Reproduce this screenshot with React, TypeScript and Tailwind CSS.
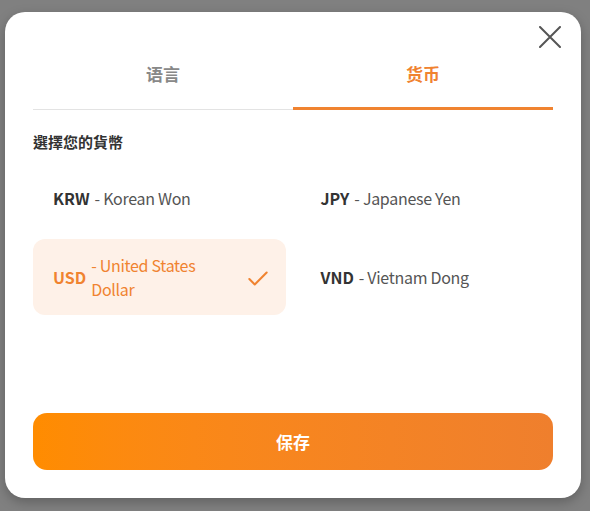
import React, { useState } from 'react';
import { Check } from 'lucide-react';

const currencies = [
  { code: 'KRW', name: 'Korean Won' },
  { code: 'JPY', name: 'Japanese Yen' },
  { code: 'USD', name: 'United States Dollar' },
  { code: 'VND', name: 'Vietnam Dong' },
];

const font = { fontFamily: '"Noto Sans CJK TC", "Noto Sans CJK SC", sans-serif' };

const App = () => {
  const [tab, setTab] = useState('currency');
  const [selected, setSelected] = useState('USD');

  return (
    <div className="w-full h-[511px] bg-[#808080] pl-[5px] pt-[12px]" style={font}>
      <div className="relative w-[576px] h-[486px] bg-white rounded-[20px] shadow-[0_4px_12px_rgba(0,0,0,0.25)] px-[28px] pt-[38px] pb-[28px] flex flex-col">
        {/* Close */}
        <button className="absolute right-[20px] top-[14px] text-[#555]">
          <svg width="22" height="22" viewBox="0 0 22 22" fill="none" stroke="currentColor" strokeWidth="2" strokeLinecap="round">
            <path d="M1 1L21 21M21 1L1 21" />
          </svg>
        </button>

        {/* Tabs */}
        <div className="flex border-b border-[#e3e3e3]">
          <button
            onClick={() => setTab('language')}
            className={`flex-1 pt-[12px] pb-[21px] text-[17px] leading-[24px] font-bold border-b-[3px] -mb-px ${
              tab === 'language' ? 'text-[#f08330] border-[#f08330]' : 'text-[#888] border-transparent'
            }`}
          >
            语言
          </button>
          <button
            onClick={() => setTab('currency')}
            className={`flex-1 pt-[12px] pb-[21px] text-[17px] leading-[24px] font-bold border-b-[3px] -mb-px ${
              tab === 'currency' ? 'text-[#f08330] border-[#f08330]' : 'text-[#888] border-transparent'
            }`}
          >
            货币
          </button>
        </div>

        <h3 className="mt-[21px] text-[15px] leading-[22px] font-bold text-[#333]">選擇您的貨幣</h3>

        {/* Currency grid */}
        <div className="mt-[19px] grid grid-cols-2 gap-[15px]">
          {currencies.map((c) => {
            const active = selected === c.code;
            return (
              <button
                key={c.code}
                onClick={() => setSelected(c.code)}
                className={`flex items-center text-left rounded-[12px] pl-[20px] pr-[15px] py-[14px] text-[16px] leading-[24px] ${
                  active ? 'bg-[#fef1e8] text-[#f08330]' : 'bg-white text-[#555]'
                }`}
              >
                <span className={`font-bold shrink-0 ${active ? 'text-[#f08330]' : 'text-[#333]'}`}>{c.code}</span>
                <span className="ml-[5px] flex-1 pr-[26px] tracking-[-0.3px]">- {c.name}</span>
                {active && <Check size={26} strokeWidth={1.9} className="shrink-0 mt-[4px] text-[#f08330]" />}
              </button>
            );
          })}
        </div>

        <div className="flex-1" />

        <button className="h-[57px] w-full rounded-[14px] bg-gradient-to-r from-[#ff8c00] to-[#ef7f2d] text-white text-[17px] font-bold">
          保存
        </button>
      </div>
    </div>
  );
};

export default App;
